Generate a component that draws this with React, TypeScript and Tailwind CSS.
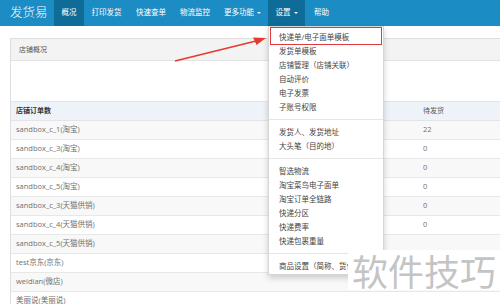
import React from 'react';

const navTabs = [
  { label: '概况', w: 'w-[30px]', active: true },
  { label: '打印发货', w: 'w-[45px]' },
  { label: '快速查单', w: 'w-[44px]' },
  { label: '物流监控', w: 'w-[44px]' },
  { label: '更多功能', w: 'w-[51px]', caret: true },
  { label: '设置', w: 'w-[37px]', caret: true, active: true },
  { label: '帮助', w: 'w-[33px]' },
];

const rows = [
  { name: 'sandbox_c_1(淘宝)', pending: '22' },
  { name: 'sandbox_c_3(淘宝)', pending: '0' },
  { name: 'sandbox_c_4(淘宝)', pending: '0' },
  { name: 'sandbox_c_5(淘宝)', pending: '0' },
  { name: 'sandbox_c_3(天猫供销)', pending: '0' },
  { name: 'sandbox_c_4(天猫供销)', pending: '0' },
  { name: 'sandbox_c_5(天猫供销)', pending: '' },
  { name: 'test京东(京东)', pending: '' },
  { name: 'weidian(微店)', pending: '' },
  { name: '美丽说(美丽说)', pending: '' },
];

// settings dropdown groups, split by dividers
const menuGroups = [
  ['快递单/电子面单模板', '发货单模板', '店铺管理（店铺关联）', '自动评价', '电子发票', '子账号权限'],
  ['发货人、发货地址', '大头笔（目的地）'],
  ['智选物流', '淘宝菜鸟电子面单', '淘宝订单全链路', '快递分区', '快递费率', '快递包裹重量'],
  ['商品设置（简称、货位、重量）'],
];

const font = { fontFamily: '"Open Sans", "Noto Sans CJK SC", sans-serif' };

const App: React.FC = () => {
  return (
    <div className="relative w-[500px] h-[304px] overflow-hidden bg-white" style={font}>
      {/* top nav */}
      <div className="flex h-[26px] items-stretch bg-[#1c8cc4]">
        <div className="w-[54px] whitespace-nowrap pl-[10px] text-[12.5px] font-light leading-[26px] text-white">发货易</div>
        {navTabs.map((t) => (
          <div
            key={t.label}
            className={`flex items-center justify-center whitespace-nowrap text-[7.5px] text-white ${t.w} ${t.active ? 'bg-[#0f6c99]' : ''}`}
          >
            <span>{t.label}</span>
            {t.caret && (
              <span className="ml-[3px] border-l-[2px] border-r-[2px] border-t-[2.5px] border-l-transparent border-r-transparent border-t-white" />
            )}
          </div>
        ))}
      </div>

      {/* panel */}
      <div className="pl-[10px] pt-[12px]">
        <div className="w-[500px] border border-[#dedede]">
          <div className="h-[22px] border-b border-[#e2e2e2] bg-[#f3f3f3] pl-[8px] text-[7px] leading-[21px] text-[#555]">
            店铺概况
          </div>
          <div className="h-[40px] bg-white" />
          <div className="flex h-[20px] items-center border-y border-[#e4e4e4] bg-[#eef3f9] text-[7px] font-semibold text-[#333]">
            <div className="w-[412px] pl-[5px]">店铺订单数</div>
            <div className="font-normal text-[#555]">待发货</div>
          </div>
          {rows.map((r, i) => (
            <div
              key={r.name}
              className={`flex h-[19px] items-center border-b border-[#e8e8e8] text-[7.5px] text-[#707070] ${i % 2 === 0 ? 'bg-[#f8f8f8]' : 'bg-white'}`}
            >
              <div className="w-[412px] pl-[5px]">{r.name}</div>
              <div>{r.pending}</div>
            </div>
          ))}
        </div>
      </div>

      {/* settings dropdown */}
      <div className="absolute left-[268px] top-[26px] w-[116px] border border-[#d6d6d6] bg-white pb-[1px] pt-[3px] shadow-[0_3px_6px_rgba(0,0,0,0.18)]">
        {menuGroups.map((g, gi) => (
          <div key={gi}>
            {gi > 0 && <div className="my-[5px] h-px bg-[#e5e5e5]" />}
            {g.map((item) => (
              <div
                key={item}
                className={`h-[14px] overflow-hidden whitespace-nowrap pl-[10px] text-[7.5px] leading-[14px] text-[#444] ${gi === 3 ? 'w-[80px]' : ''}`}
              >
                {item}
              </div>
            ))}
          </div>
        ))}
      </div>

      {/* red annotation box */}
      <div className="absolute left-[270px] top-[27px] h-[18px] w-[112px] border-[1.5px] border-[#e0393e]" />

      {/* red arrow */}
      <svg className="absolute left-0 top-0" width="500" height="304">
        <line x1="175" y1="61" x2="256" y2="41" stroke="#e6392f" strokeWidth="1.6" />
        <polygon points="266,38 253,37.5 256.5,45" fill="#e6392f" />
      </svg>

      {/* watermark */}
      <div className="absolute left-[348px] top-[250px] h-[40px] w-[152px] bg-white pl-[4px] text-[36px] leading-[40px] text-[#c4c4c4]" style={{ fontFamily: '"Noto Sans CJK SC", sans-serif' }}>
        软件技巧
      </div>
    </div>
  );
};

export default App;
